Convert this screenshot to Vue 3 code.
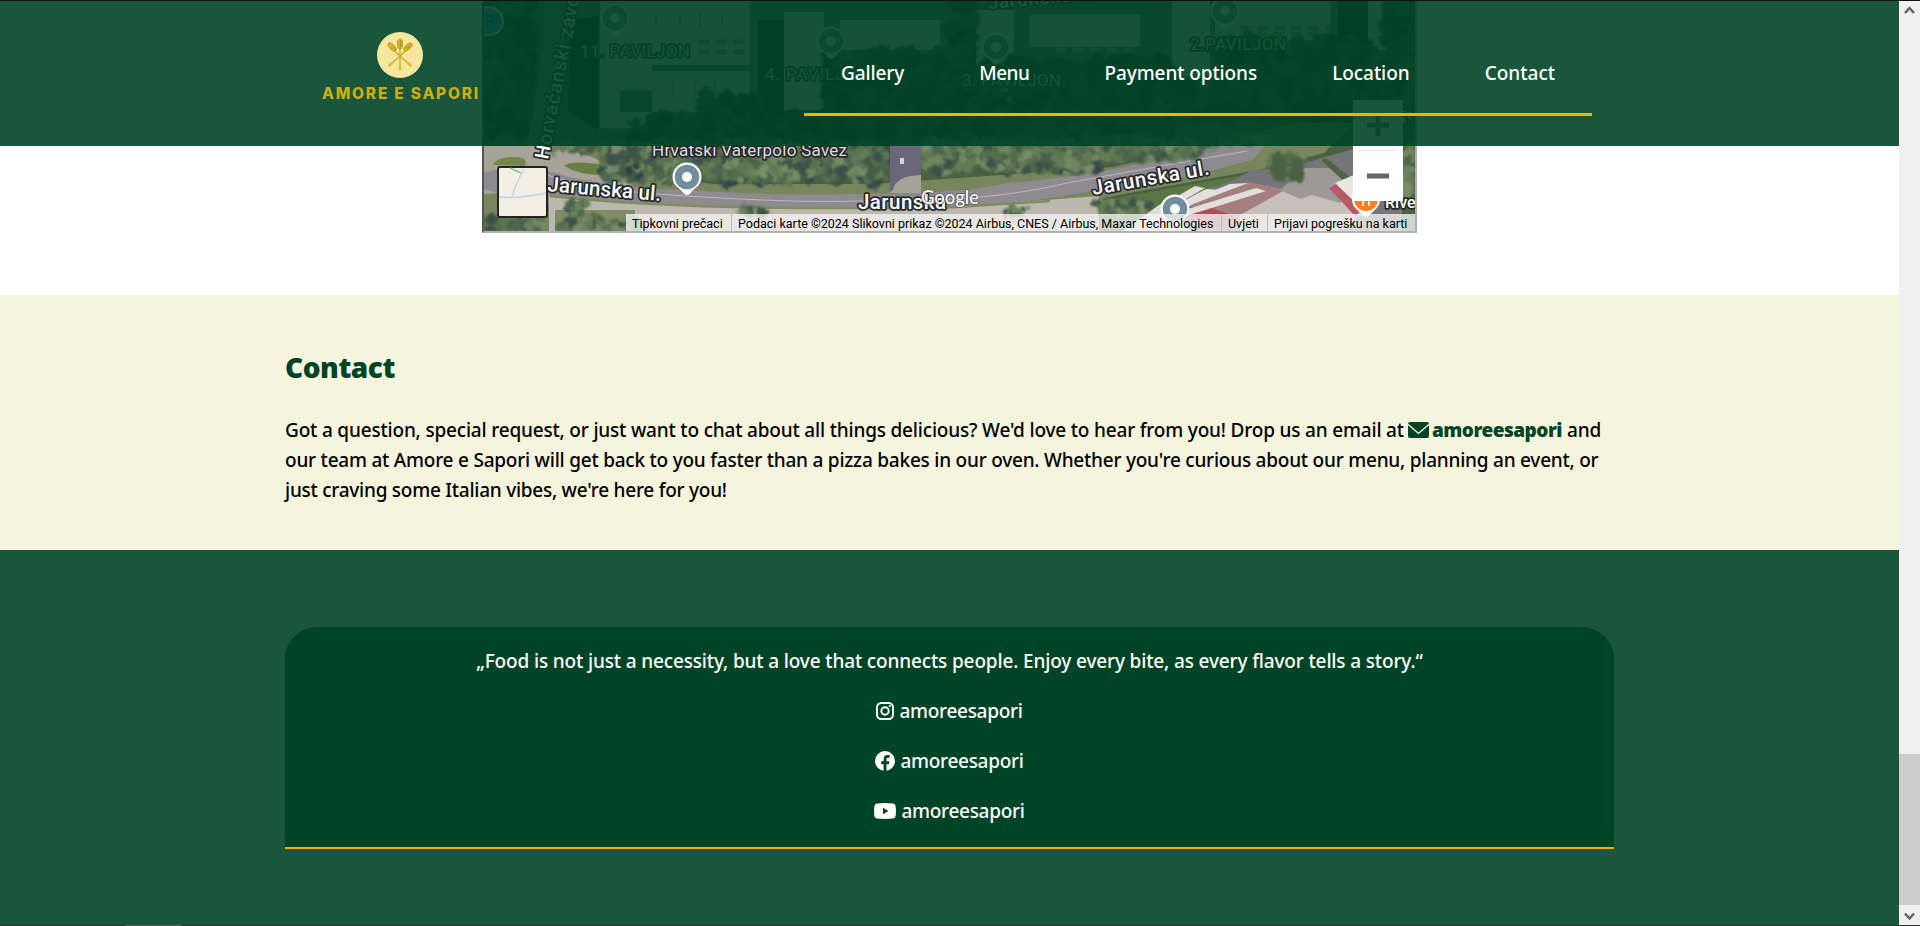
<script setup>
const links = [
  { label: 'Gallery', cls: 'w1' },
  { label: 'Menu', cls: 'w2' },
  { label: 'Payment options', cls: 'w3' },
  { label: 'Location', cls: 'w4' },
  { label: 'Contact', cls: 'w5' }
]

// Small deterministic generator so the tree canopy is stable between renders.
let seed = 7
const rnd = () => {
  seed = (seed * 16807) % 2147483647
  return seed / 2147483647
}
const greens = ['#586f4c', '#647b55', '#465d47', '#6f8760', '#4e6550', '#788d66', '#3d5148', '#5c7450']
const shade = ['#33454a', '#3a4d4b', '#2f3f47', '#445846']
const dark = ['#22352c', '#2c4030', '#344a35', '#1f3030', '#3a5035']
const plant = (list, x0, x1, y0, y1, n, r, palette = greens) => {
  for (let i = 0; i < n; i++) {
    list.push({
      x: x0 + rnd() * (x1 - x0),
      y: y0 + rnd() * (y1 - y0),
      r: r * (0.5 + rnd() * 0.8),
      c: palette[Math.floor(rnd() * palette.length)]
    })
  }
}
const back = []
plant(back, 484, 532, 0, 138, 160, 7, dark)
plant(back, 630, 900, 116, 150, 260, 7, dark)
plant(back, 700, 758, 95, 130, 80, 7, dark)
plant(back, 826, 948, 55, 140, 260, 8, dark)
plant(back, 975, 1170, 62, 140, 380, 8, dark)
plant(back, 1170, 1385, 82, 118, 260, 8, dark)
plant(back, 1215, 1370, 40, 95, 240, 8, dark)
plant(back, 1385, 1415, 0, 130, 70, 8, dark)
plant(back, 948, 975, 0, 140, 60, 7, dark)

const front = []
plant(front, 632, 886, 148, 184, 110, 6, shade)
plant(front, 632, 886, 144, 180, 520, 4.5)
plant(front, 924, 1100, 144, 170, 80, 6, shade)
plant(front, 924, 1100, 140, 170, 420, 4.5)
plant(front, 1085, 1200, 138, 160, 180, 4.5)
plant(front, 1200, 1250, 138, 148, 30, 4)
plant(front, 602, 640, 144, 180, 90, 5, [...greens, ...shade])
plant(front, 552, 605, 144, 152, 30, 4)
plant(front, 1268, 1303, 156, 182, 60, 5)
plant(front, 1402, 1415, 146, 195, 40, 5)
plant(front, 486, 545, 219, 231, 60, 5)
plant(front, 566, 586, 202, 214, 30, 4)
plant(front, 562, 640, 219, 231, 60, 5)
plant(front, 1095, 1150, 202, 212, 40, 4)
plant(front, 742, 766, 208, 214, 14, 4)
plant(front, 1005, 1026, 208, 214, 14, 4)

const pins = [
  { x: 615, y: 18 }, { x: 831, y: 41 }, { x: 996, y: 47 },
  { x: 1225, y: 11 }, { x: 687, y: 177 }, { x: 1175, y: 209 }
]
</script>

<template>
  <div class="screen">
    <main class="page">
      <header class="topbar">
        <div class="brand">
          <svg class="emblem" viewBox="0 0 46 46">
            <circle cx="23" cy="23" r="23" fill="#f5e79e" />
            <g stroke="#c9ab22" stroke-width="1.300" fill="none" stroke-linecap="round">
              <path d="M23 16V34M17.500 19L33 33M28.500 19L13 33" />
              <path d="M23 34v3M31.500 31.500l2 2M14.500 31.500l-2 2" stroke="#dcbc2a" stroke-width="2.600" />
            </g>
            <g fill="#d6b51e" stroke="#9d8216" stroke-width=".5">
              <ellipse cx="23" cy="12" rx="2.700" ry="5" />
              <ellipse cx="15" cy="15" rx="2.600" ry="5.200" transform="rotate(-42 15 15)" />
              <ellipse cx="31" cy="15" rx="2.600" ry="5.200" transform="rotate(48 31 15)" />
            </g>
            <path d="M23.800 8v7M17 15l2 3M30 16l3-2" stroke="#8f7715" stroke-width=".7" fill="none" />
          </svg>
          <span class="brand-name">AMORE E SAPORI</span>
        </div>
        <nav class="nav">
          <a v-for="l in links" :key="l.label" :class="l.cls">{{ l.label }}</a>
        </nav>
      </header>

      <section class="location">
        <div class="map">
          <svg class="satellite" viewBox="484 0 931 231">
            <defs>
              <filter id="grain" filterUnits="userSpaceOnUse" x="484" y="0" width="931" height="231" color-interpolation-filters="sRGB">
                <feTurbulence type="fractalNoise" baseFrequency=".2" numOctaves="3" seed="4" result="n" />
                <feDisplacementMap in="SourceGraphic" in2="n" scale="8" xChannelSelector="R" yChannelSelector="G" result="s" />
                <feGaussianBlur in="s" stdDeviation=".9" />
              </filter>
            </defs>
            <rect x="484" width="931" height="231" fill="#4a6142" />
            <path d="M555 0H1385L1340 60L750 100L600 135Z" fill="#6c7466" />
            <path d="M600 0h150v112h-98v16h-52zM784 12h40v98h-40zM840 20h100v30h-100zM976 10h38v120h-38zM1030 15h110v32h-110zM1172 0h38v90h-38zM1215 0h115v40h-115zM1368 0h26v50h-26z" fill="#d4d4cc" />
            <path d="M570 20l28-4v114l-30-18zM758 20h26v100h-26zM948 20h28v80h-28zM1338 0h30v55h-30z" fill="#14251f" />
            <path d="M620 90h32v22h-32zM652 65h100v6H652z" fill="#5d6a62" />
            <path d="M699 42h48M699 52h48M1055 50h80M1240 28h90M1240 34h90" stroke="#8b968d" stroke-width="5" stroke-dasharray="11 6" />
            <path d="M656 13v14M680 13v14M700 13v14M722 13v14M673 82v12M695 82v12M715 82v12" stroke="#76807a" />
            <g filter="url(#grain)">
              <circle v-for="(t, i) in back" :key="i" :cx="t.x" :cy="t.y" :r="t.r" :fill="t.c" />
            </g>
            <path d="M545 0h24q-8 80-26 150l-20 10q20-80 22-160z" fill="#757c72" />

            <path d="M484 146h140l40 30 50 8h160l240-17 180-44h60l-30 30-60 16-135 24-120 24-160 14H484z" fill="#77865c" />
            <path d="M484 146h66q40 8 56 18l34 12-10 10-146 8z" fill="#a7a398" />
            <path d="M484 172q50-9 85 5 60 12 118 13 90 6 160 4 110 1 160-11 100-8 165-28 62-17 103-21l-23 26-58 15-150 24-95 12-120 2-170-4-120-4-55-16z" fill="#8d8b90" />
            <path d="M564 166q6-6 35-2 20 5 20 10-35 4-55-8z" fill="#687f43" />
            <path d="M493 165q4-9 22-8 14 0 10 9z" fill="#74884c" />
            <path d="M540 172q40 18 147 24 110 7 170 5 130 2 210-18 110-20 180-32" fill="none" stroke="#bbb9b9" />
            <path d="M549 196q100 11 250 12h140l160-12v35H549z" fill="#bcb7af" />
            <path d="M550 196q100 11 250 12h140l110-7" fill="none" stroke="#7f8e60" stroke-width="2.500" />
            <path d="M555 210h80v21h-80zM484 217h60v14h-60z" fill="#5e7442" opacity=".65" />
            <path d="M1105 200l150-27 10 8-94 32-66 4z" fill="#5c7544" />
            <g filter="url(#grain)">
              <circle v-for="(t, i) in front" :key="i" :cx="t.x" :cy="t.y" :r="t.r" :fill="t.c" />
            </g>
            <path d="M890 144h31v48l-31-2z" fill="#686678" />
            <path d="M893 190q2-14 28-15v18h-32z" fill="#a3a39a" />
            <path d="M900 158h4v6h-4z" fill="#cfd4e0" />
            <path d="M1250 171l44-5 70-20h38v85h-250l20-30 60-20z" fill="#77757c" />
            <path d="M1122 231l40-28 30 28z" fill="#ddd" />
            <path d="M1186 203l62-21 50 10-50 26-35 0z" fill="#a57f80" />
            <path d="M1180 220l26-14 28 10-14 12z" fill="#b14a5a" />
            <path d="M1195 186l10 2-28 16-6-4zM1206 189l14 1-38 20-12-2zM1230 184l18-1-68 26-5-3zM1256 188l10 3-80 25-8-4z" fill="#e2dfdc" />
            <path d="M1240 215l52-29 20 9 15-9 42 25-32 20h-97z" fill="#c7c0ba" />
            <path d="M1305 168h31l18 20-14 15-28-8-12 4-20-9z" fill="#9d9999" />
            <path d="M1326 158l30 24-5 6-30-28z" fill="#4b6640" />
            <path d="M1329 188l8-4 24 25-5 8z" fill="#b65964" />
            <path d="M1335 183l28-12v39z" fill="#e8e6e4" />
            <g filter="url(#grain)">
              <path d="M1272 158q8-8 14 0l2 20q-8 6-18-2zM1290 160q10-6 14 2v18q-8 6-16-2z" fill="#4a6243" />
            </g>

            <circle cx="489" cy="21" r="14" fill="#4d84d9" stroke="#fff" stroke-width="2" />
            <text x="485" y="27" font-size="16" class="lbl blue">P</text>
            <text class="lbl" font-size="19.500" transform="translate(548 160) rotate(-79)" textLength="172">Horvaćanski zavoj</text>
            <text class="lbl grey" font-size="17" x="580" y="57" textLength="110">11. PAVILJON</text>
            <text class="lbl grey" font-size="17" x="765" y="80" textLength="105">4. PAVILJON</text>
            <text class="lbl grey" font-size="17" x="962" y="86" textLength="99">3. PAVILJON</text>
            <text class="lbl grey" font-size="17" x="1190" y="50" textLength="96">2.PAVILJON</text>
            <text class="lbl" font-size="19" transform="translate(988 9) rotate(-5)" textLength="112">Jarunska ul.</text>
            <text class="lbl grey" font-size="17" x="652" y="156" textLength="195">Hrvatski Vaterpolo Savez</text>
            <text class="lbl" font-size="20.500" transform="translate(547 191) rotate(5)" textLength="114">Jarunska ul.</text>
            <text class="lbl" font-size="20.500" x="858" y="209" textLength="88">Jarunska</text>
            <text class="lbl" font-size="20.500" transform="translate(1093 195) rotate(-10)" textLength="119">Jarunska ul.</text>
            <text class="lbl" font-size="16" x="1385" y="208">River</text>
            <text class="lbl" font-size="16" transform="translate(1400 124) rotate(-20)">Tr</text>

            <g v-for="p in pins" :key="p.x" :transform="`translate(${p.x} ${p.y})`">
              <path d="M-14.500 0a14.500 14.500 0 1 1 29 0c0 9-7 10-11 16q-3.500 4-7 0c-4-6-11-7-11-16z" fill="#fff" />
              <circle r="12.300" fill="#738e9b" /><circle r="5" fill="#fff" />
            </g>
            <path d="M1352 199a14 14 0 0 1 28 0c0 9-6 10-10 16q-4 4-8 0c-4-6-10-7-10-16z" fill="#fff" />
            <circle cx="1366" cy="199" r="12" fill="#fa8122" />
            <path d="M1363 198v8M1369 198v8" stroke="#fff" stroke-width="1.500" />
            <text class="google" x="921" y="204" textLength="58">Google</text>

            <rect x="498" y="167" width="49" height="50" rx="2" fill="#f3efe4" stroke="#222" stroke-width="2" />
            <path d="M499 197q20 2 47-4M512 197q3-12 12-28" stroke="#c5d3e8" stroke-width="1.400" fill="none" />
            <path d="M510 168l11 5" stroke="#7bcba0" stroke-width="1.400" />
            <rect x="1353" y="100" width="50" height="101" fill="#fff" />
            <path d="M1359 150.500h37" stroke="#e6e6e6" />
            <path d="M1367 176h22M1367 125h22M1378 114v22" stroke="#666" stroke-width="5" />
          </svg>
          <div class="attribution">
            <span class="a1">Tipkovni prečaci</span>
            <span class="a2">Podaci karte ©2024 Slikovni prikaz ©2024 Airbus, CNES / Airbus, Maxar Technologies</span>
            <span class="a3">Uvjeti</span>
            <span class="a4">Prijavi pogrešku na karti</span>
          </div>
        </div>
      </section>

      <section class="contact">
        <h2>Contact</h2>
        <p>
          <span class="line l1">
            <span class="t1">Got a question, special request, or just want to chat about all things delicious? We'd love to hear from you! Drop us an email at</span>
            <svg class="mail" viewBox="0 0 21 16">
              <path d="M2 0h17a2 2 0 0 1 2 1.600L10.500 10.600 0 1.600a2 2 0 0 1 2-1.600zM0 3.200l10.500 9L21 3.200V14a2 2 0 0 1-2 2H2a2 2 0 0 1-2-2z" fill="#004427" />
            </svg>
            <a>amoreesapori</a>
            <span class="t2">and</span>
          </span>
          <span class="line l2">our team at Amore e Sapori will get back to you faster than a pizza bakes in our oven. Whether you're curious about our menu, planning an event, or</span>
          <span class="line l3">just craving some Italian vibes, we're here for you!</span>
        </p>
      </section>

      <footer class="footer">
        <div class="card">
          <p class="quote">„Food is not just a necessity, but a love that connects people. Enjoy every bite, as every flavor tells a story.“</p>
          <a class="social">
            <svg width="18" height="18" viewBox="0 0 18 18" fill="none" stroke="#fff" stroke-width="1.900">
              <rect x=".95" y=".95" width="16.100" height="16.100" rx="4.500" /><circle cx="9" cy="9" r="3.700" /><circle cx="13.800" cy="4.200" r="1.100" fill="#fff" stroke="none" />
            </svg>
            <span>amoreesapori</span>
          </a>
          <a class="social">
            <svg width="20" height="20" viewBox="0 0 20 20">
              <circle cx="10" cy="10" r="10" fill="#fff" />
              <path d="M8.600 20v-6.800H6.200v-3h2.400V8.600c0-3.200 1.500-4.600 4.300-4.600.6 0 1.300.1 1.700.2v2.500h-1.100c-1.500 0-2 .6-2 1.900v1.600h2.900l-.5 3h-2.400V20z" fill="#004427" />
            </svg>
            <span>amoreesapori</span>
          </a>
          <a class="social">
            <svg width="22" height="16" viewBox="0 0 22 16">
              <path d="M3 .4Q11-.4 19 .4q2.300.2 2.600 2.500.7 5.100 0 10.200-.3 2.300-2.600 2.500-8 .8-16 0Q.7 15.400.4 13.100-.3 8 .4 2.900.7.600 3 .4z" fill="#fff" />
              <path d="M9 4.800v6.400L14.400 8z" fill="#004427" />
            </svg>
            <span>amoreesapori</span>
          </a>
        </div>
      </footer>
      <div class="edge-top"></div>
      <div class="edge-bottom"></div>
    </main>
    <aside class="scrollbar">
      <svg viewBox="0 0 21 21"><path d="M6 13l4.500-5 4.500 5" fill="none" stroke="#606060" stroke-width="2.400" /></svg>
      <div class="thumb"></div>
      <svg viewBox="0 0 21 21"><path d="M6 8.500l4.500 5 4.500-5" fill="none" stroke="#606060" stroke-width="2.400" /></svg>
    </aside>
  </div>
</template>

<style>
body { overflow: hidden; }
</style>

<style scoped>
* { box-sizing: border-box; }
.screen { display: flex; width: 1920px; height: 926px; overflow: hidden; font-family: "Noto Sans", sans-serif; font-size: 19px; font-weight: 500; }
.page { position: relative; width: 1899px; height: 926px; display: flex; flex-direction: column; background: #fff; }
.topbar { position: absolute; z-index: 2; top: 0; left: 0; width: 100%; height: 146px; padding: 32px 307px 0 322px; display: flex; justify-content: space-between; align-items: flex-start; background: rgba(0, 68, 39, .9); }
.brand { width: 155px; display: flex; flex-direction: column; align-items: center; }
.emblem { width: 46px; height: 46px; }
.brand-name { align-self: flex-start; margin-top: 6px; font: 800 15.500px/20px Inter, sans-serif; letter-spacing: 1.780px; color: #ccae12; white-space: nowrap; }
.nav { width: 788px; height: 84px; padding: 27px 37px 0; display: flex; justify-content: space-between; border-bottom: 3px solid #ffae00; color: #fff; line-height: 28px; white-space: nowrap; }
.w1 { letter-spacing: -.1px; }
.w2 { letter-spacing: -.5px; }
.w3 { letter-spacing: -.1px; }
.w4 { letter-spacing: -.05px; }
.location { height: 295px; flex: none; display: flex; justify-content: center; align-items: flex-start; }
.map { position: relative; width: 935px; height: 233px; border: solid; border-width: 0 2px 2px; border-color: #b0b0b0 #b0b0b0 #b0b0b0 #555; overflow: hidden; }
.satellite { display: block; width: 931px; height: 231px; }
.lbl { font-family: Roboto, sans-serif; font-weight: 500; fill: #fff; stroke: #26282b; stroke-width: 3.500px; paint-order: stroke; stroke-linejoin: round; }
.grey { fill: #dcdcdc; font-weight: 400; }
.blue { fill: #174ea6; stroke: none; }
.google { font: 500 18.500px Lato, sans-serif; fill: #fff; stroke: #555; stroke-width: 1.500px; paint-order: stroke; }
.attribution { position: absolute; right: 0; bottom: 0; width: 789px; height: 17px; display: flex; background: rgba(245, 245, 245, .78); font: 400 12.500px/19px Roboto, sans-serif; color: #000; white-space: nowrap; }
.attribution span { padding-left: 6px; border-left: 1px solid #bbb; }
.attribution .a1 { width: 105px; border: 0; }
.attribution .a2 { width: 490px; }
.attribution .a3 { width: 46px; }
.attribution .a4 { flex: 1; }
.contact { height: 255px; flex: none; padding: 52px 285px 0; background: #f5f4dc; color: #000; }
h2 { margin: 0; font-size: 28px; line-height: 40px; font-weight: 900; letter-spacing: -.45px; color: #004427; }
p { margin: 0; }
.contact p { margin-top: 28px; }
.line { display: block; height: 30px; line-height: 30px; white-space: nowrap; }
.l1 { display: flex; width: 1316px; }
.t1 { width: 1123px; flex: none; letter-spacing: -.185px; }
.l2 { letter-spacing: -.228px; }
.l3 { letter-spacing: -.25px; }
.mail { width: 21px; height: 16px; margin: 7px 3px 0 0; flex: none; }
.l1 a { width: 135px; font-weight: 900; letter-spacing: -.5px; color: #004427; }
.t2 { letter-spacing: -.2px; }
.footer { height: 376px; padding: 77px 285px 0; background: #1a563c; }
.card { height: 222px; padding-top: 19px; display: flex; flex-direction: column; align-items: center; background: #004427; border-bottom: 2px solid #ffae00; border-radius: 32px 32px 0 0; color: #fff; }
.quote { line-height: 30px; letter-spacing: -.145px; white-space: nowrap; }
.social { display: flex; align-items: center; gap: 5px; height: 30px; margin-top: 20px; line-height: 30px; letter-spacing: -.28px; }
.edge-top, .edge-bottom { position: absolute; z-index: 3; left: 0; width: 1920px; height: 1px; background: #111; }
.edge-top { top: 0; }
.edge-bottom { bottom: 0; background: linear-gradient(90deg, #26382f 126px, #54685d 126px 182px, #26382f 182px); }
.scrollbar { width: 21px; height: 926px; display: flex; flex-direction: column; background: #f0f0f0; }
.scrollbar svg { width: 21px; height: 21px; flex: none; }
.thumb { height: 151px; margin-top: auto; background: #cdcdcd; }
</style>
